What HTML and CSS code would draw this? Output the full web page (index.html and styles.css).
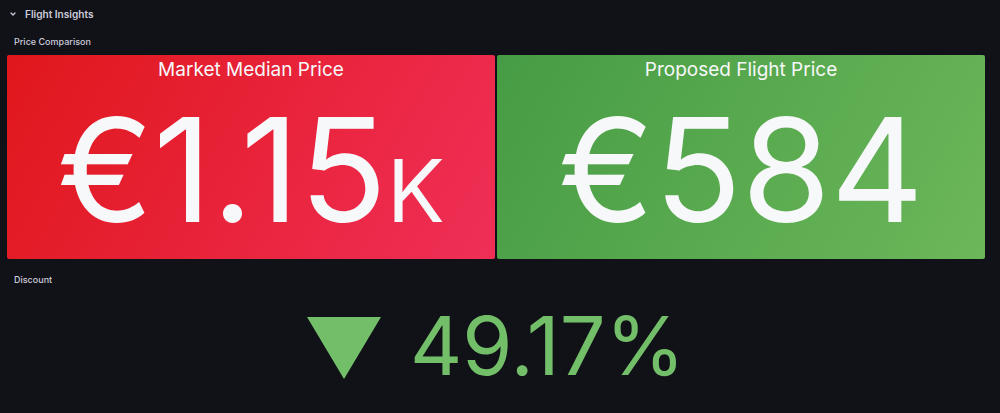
FILE: index.html
```html
<!DOCTYPE html>
<html lang="en">
<head>
<meta charset="utf-8">
<title>Flight Insights</title>
<link rel="stylesheet" href="styles.css">
</head>
<body>
<div class="dashboard">
  <div class="row-header">
    <svg class="chevron" width="8" height="8" viewBox="0 0 8 8"><path d="M2 3 L4 5 L6 3" fill="none" stroke="#ccccdc" stroke-width="1.3" stroke-linecap="round" stroke-linejoin="round"/></svg>
    <span class="row-title">Flight Insights</span>
  </div>
  <div class="section-title">Price Comparison</div>
  <div class="stat-row">
    <div class="stat stat-red">
      <div class="stat-title">Market Median Price</div>
      <div class="stat-value">€1.15<span class="suffix">K</span></div>
    </div>
    <div class="stat stat-green">
      <div class="stat-title">Proposed Flight Price</div>
      <div class="stat-value">€584</div>
    </div>
  </div>
  <div class="section-title discount-title">Discount</div>
  <div class="discount">
    <svg class="triangle" width="74" height="62" viewBox="0 0 74 62"><polygon points="0,0 74,0 37,62" fill="#73bf69"/></svg>
    <span class="discount-value">49.17%</span>
  </div>
</div>
</body>
</html>
```

FILE: styles.css
```css
html, body {
  margin: 0;
  padding: 0;
  background: #111217;
  height: 100%;
  overflow: hidden;
}
body {
  font-family: Inter, "Noto Sans", sans-serif;
  color: #ccccdc;
}
.dashboard {
  display: flex;
  flex-direction: column;
  padding: 0 15px 0 7px;
}
.row-header {
  display: flex;
  align-items: center;
  height: 28px;
  padding-left: 2px;
  gap: 8px;
}
.chevron {
  display: block;
}
.row-title {
  font-size: 10.1px;
  font-weight: 600;
  color: #ccccdc;
}
.section-title {
  font-size: 9px;
  font-weight: 500;
  color: #ccccdc;
  padding-left: 7px;
  height: 27px;
  display: flex;
  align-items: center;
}
.stat-row {
  display: flex;
  gap: 2px;
  height: 204px;
}
.stat {
  flex: 1;
  border-radius: 2px;
  display: flex;
  flex-direction: column;
  align-items: center;
  color: #f7f8fa;
  overflow: hidden;
}
.stat-red {
  background: linear-gradient(120deg, #e0171b, #f02f58);
}
.stat-green {
  background: linear-gradient(120deg, #469c44, #6cb75a);
}
.stat-title {
  font-size: 19px;
  line-height: 22px;
  margin-top: 4px;
}
.stat-value {
  font-size: 144px;
  line-height: 174px;
  margin-top: 2px;
}
.suffix {
  font-size: 86px;
}
.discount-title {
  margin-top: 7px;
  height: 26px;
}
.discount {
  display: flex;
  align-items: center;
  justify-content: center;
  gap: 29px;
  height: 100px;
  margin-top: 4px;
}
.triangle {
  display: block;
  margin-top: 4px;
}
.discount-value {
  font-size: 81px;
  line-height: 98px;
  color: #73bf69;
}
```
